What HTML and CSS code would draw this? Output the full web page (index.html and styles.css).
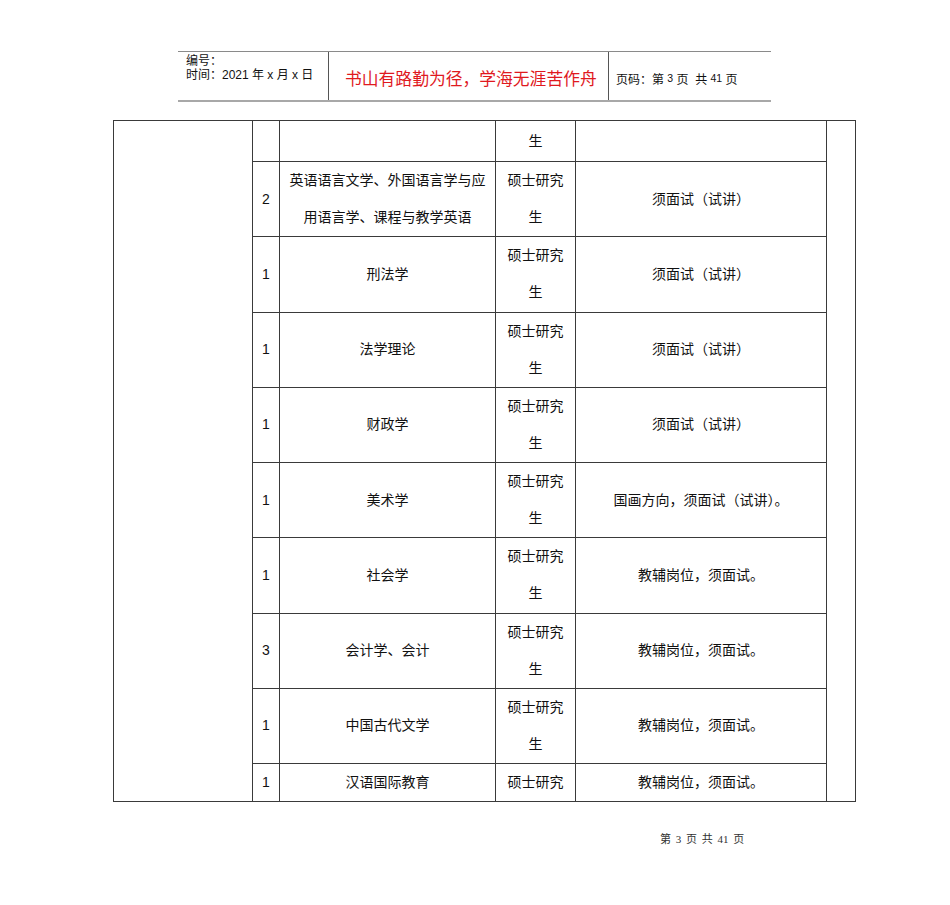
FILE: index.html
```html
<!DOCTYPE html>
<html lang="zh">
<head>
<meta charset="utf-8">
<title>第3页</title>
<link rel="stylesheet" href="styles.css">
</head>
<body>
<div class="page">
  <div class="header">
    <div class="h-left">
      <div class="h-line">编号：</div>
      <div class="h-line">时间：2021 年 x 月 x 日</div>
    </div>
    <div class="h-mid">书山有路勤为径，学海无涯苦作舟</div>
    <div class="h-right">页码：第 <span class="sm">3</span> 页 &nbsp;共 <span class="sm">41</span> 页</div>
  </div>

  <table class="grid">
    <colgroup>
      <col class="c1"><col class="c2"><col class="c3"><col class="c4"><col class="c5"><col class="c6">
    </colgroup>
    <tr class="half">
      <td rowspan="10" class="blank"></td>
      <td></td><td></td><td>生</td><td></td>
      <td rowspan="10" class="blank"></td>
    </tr>
    <tr class="full"><td>2</td><td>英语语言文学、外国语言学与应用语言学、课程与教学英语</td><td>硕士研究生</td><td>须面试（试讲）</td></tr>
    <tr class="full"><td>1</td><td>刑法学</td><td>硕士研究生</td><td>须面试（试讲）</td></tr>
    <tr class="full"><td>1</td><td>法学理论</td><td>硕士研究生</td><td>须面试（试讲）</td></tr>
    <tr class="full"><td>1</td><td>财政学</td><td>硕士研究生</td><td>须面试（试讲）</td></tr>
    <tr class="full"><td>1</td><td>美术学</td><td>硕士研究生</td><td>国画方向，须面试（试讲）。</td></tr>
    <tr class="full"><td>1</td><td>社会学</td><td>硕士研究生</td><td>教辅岗位，须面试。</td></tr>
    <tr class="full"><td>3</td><td>会计学、会计</td><td>硕士研究生</td><td>教辅岗位，须面试。</td></tr>
    <tr class="full"><td>1</td><td>中国古代文学</td><td>硕士研究生</td><td>教辅岗位，须面试。</td></tr>
    <tr class="last"><td>1</td><td>汉语国际教育</td><td>硕士研究</td><td>教辅岗位，须面试。</td></tr>
  </table>

  <div class="footer">第 3 页 共 41 页</div>
</div>
</body>
</html>
```

FILE: styles.css
```css
html, body {
  margin: 0;
  padding: 0;
  background: #ffffff;
}

body {
  font-family: "Liberation Sans", "Noto Sans CJK SC", sans-serif;
  color: #111;
}

.page {
  width: 950px;
  height: 905px;
  padding-top: 51px;
  box-sizing: border-box;
}

.header {
  margin-left: 178px;
  width: 593px;
  height: 51px;
  display: flex;
  border-top: 1px solid #8a8a8a;
  border-bottom: 2px solid #a8a8a8;
  box-sizing: border-box;
}

.h-left {
  width: 151px;
  border-right: 1px solid #555;
  padding: 2px 0 0 8px;
  box-sizing: border-box;
  font-size: 12px;
  white-space: nowrap;
}

.h-line {
  height: 14px;
  line-height: 14px;
}

.h-mid {
  width: 280px;
  border-right: 1px solid #555;
  box-sizing: border-box;
  color: #e0191e;
  font-size: 16.8px;
  display: flex;
  align-items: center;
  padding-left: 16px;
  padding-top: 4px;
  white-space: nowrap;
}

.h-right {
  flex: 1;
  font-size: 12px;
  display: flex;
  align-items: center;
  padding-left: 7px;
  padding-top: 4px;
  white-space: pre;
}

.h-right .sm {
  font-size: 10.5px;
}

.grid {
  margin-top: 18px;
  margin-left: 113px;
  width: 743px;
  border-collapse: collapse;
  table-layout: fixed;
  font-size: 14px;
  line-height: 37px;
}

.grid td {
  border: 1px solid #3a3a3a;
  text-align: center;
  vertical-align: middle;
  padding: 0 7px;
}

.grid .c1 { width: 139px; }
.grid .c2 { width: 27px; }
.grid .c3 { width: 216px; }
.grid .c4 { width: 80px; }
.grid .c5 { width: 251px; }
.grid .c6 { width: 29px; }

.grid tr td.blank { padding: 0; }

.grid tr.half td { height: 40px; }
.grid tr.full td { height: 74.25px; }
.grid tr.last td { height: 37px; }

.footer {
  margin-top: 28px;
  margin-left: 660px;
  font-family: "Liberation Serif", "Noto Sans CJK SC", serif;
  font-size: 11px;
  color: #333;
  word-spacing: 2px;
}
```
